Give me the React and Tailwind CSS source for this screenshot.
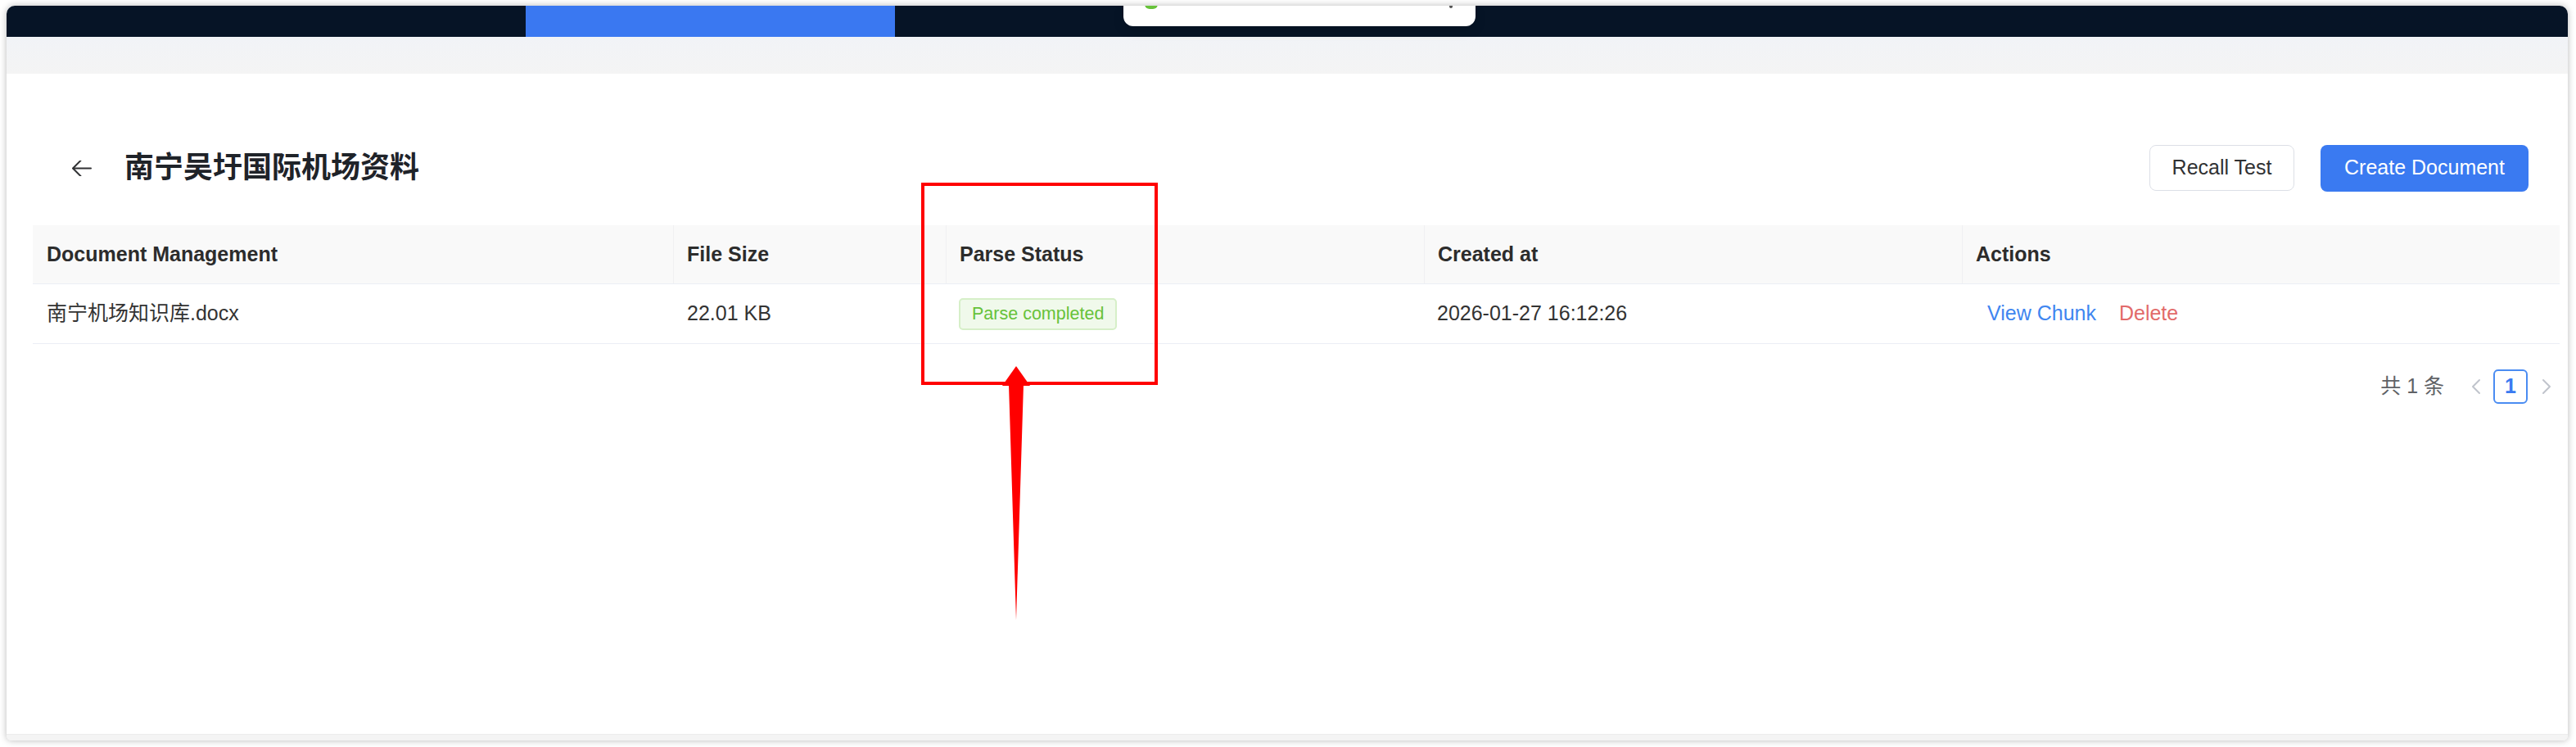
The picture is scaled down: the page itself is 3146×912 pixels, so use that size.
import { ArrowLeft } from "lucide-react";

const columns = ["Document Management", "File Size", "Parse Status", "Created at", "Actions"];

const docs = [
  {
    id: 1,
    name: "南宁机场知识库.docx",
    size: "22.01 KB",
    status: "Parse completed",
    createdAt: "2026-01-27 16:12:26",
  },
];

// element-style back arrow
function BackIcon() {
  return (
    <svg viewBox="160 224 736 576" width="24" height="19" fill="#303133">
      <path d="M224 480h640a32 32 0 1 1 0 64H224a32 32 0 0 1 0-64z" />
      <path d="m237.248 512 265.408 265.344a32 32 0 0 1-45.312 45.312l-288-288a32 32 0 0 1 0-45.312l288-288a32 32 0 1 1 45.312 45.312L237.248 512z" />
    </svg>
  );
}

function Chevron({ dir }) {
  return (
    <svg width="12" height="20" viewBox="0 0 12 20" fill="none" stroke="#c0c4cc" strokeWidth="2" strokeLinecap="round" strokeLinejoin="round">
      {dir === "left" ? <polyline points="10,2 2,10 10,18" /> : <polyline points="2,2 10,10 2,18" />}
    </svg>
  );
}

export default function App() {
  return (
    <div className="relative w-[3146px] h-[912px] bg-white overflow-hidden pt-[7px] font-['Liberation_Sans','Noto_Sans_CJK_SC',sans-serif]">
      <div className="relative ml-[8px] w-[3128px] h-[897px] flex flex-col rounded-t-[10px] rounded-b-[6px] overflow-hidden shadow-[0_0_8px_rgba(0,0,0,0.28)]">
        {/* app header */}
        <div className="h-[38px] shrink-0 bg-[#061426] flex">
          <div className="ml-[634px] w-[451px] h-full bg-[#3a78f1]" />
        </div>
        {/* toast, mostly scrolled out of view */}
        <div className="absolute top-0 left-[1364px] w-[430px] h-[25px] bg-white rounded-b-[12px] shadow-[0_6px_14px_rgba(0,0,0,0.12)]">
          <div className="absolute -top-[8px] left-[26px] w-[16px] h-[12px] rounded-full bg-[#67c23a]" />
          <div className="absolute top-0 right-[28px] w-[4px] h-[3px] rounded-b-full bg-[#555]" />
        </div>
        <div className="h-[45px] shrink-0 bg-gradient-to-b from-[#f1f3f7] to-[#f4f4f4]" />

        <div className="flex-1 bg-white pl-[32px] pr-[10px] pt-[87px]">
          <div className="h-[56px] flex items-center justify-between pl-[48px] pr-[38px]">
            <div className="flex items-center gap-[40px]">
              <BackIcon />
              <h1 className="text-[36px] leading-none font-bold text-[#1f2329]">南宁吴圩国际机场资料</h1>
            </div>
            <div className="flex items-center gap-[32px]">
              <button className="w-[177px] h-[56px] rounded-[8px] border border-[#dcdfe6] bg-white text-[25px] text-[#303133]">
                Recall Test
              </button>
              <button className="w-[254px] h-[57px] rounded-[8px] bg-[#3a7af1] text-[25px] text-white">
                Create Document
              </button>
            </div>
          </div>

          <div className="mt-[42px] w-full">
            <div className="grid grid-cols-[782px_333px_584px_657px_1fr] h-[72px] bg-[#f9f9f9] border-b border-[#ebeef5]">
              {columns.map((c, i) => (
                <div
                  key={c}
                  className={`flex items-center text-[25px] font-bold text-[#2c2c2c] ${i > 0 ? "pl-[16px] border-l border-[#f0f0f2]" : "pl-[17px]"}`}
                >
                  {c}
                </div>
              ))}
            </div>
            {docs.map((d) => (
              <div
                key={d.id}
                className="grid grid-cols-[782px_333px_584px_657px_1fr] h-[73px] border-b border-[#ebeef5] text-[25px] text-[#333]"
              >
                <div className="flex items-center pl-[17px]">{d.name}</div>
                <div className="flex items-center pl-[17px]">{d.size}</div>
                <div className="flex items-center pl-[16px]">
                  <span className="h-[39px] px-[14px] flex items-center rounded-[5px] border-2 border-[#d6efc8] bg-[#f0f9eb] text-[21.5px] text-[#67c23a]">
                    {d.status}
                  </span>
                </div>
                <div className="flex items-center pl-[16px]">{d.createdAt}</div>
                <div className="flex items-center pl-[31px] gap-[28px]">
                  <span className="text-[#3f86f0]">View Chunk</span>
                  <span className="text-[#e26a6a]">Delete</span>
                </div>
              </div>
            ))}
          </div>

          <div className="mt-[31px] flex items-center justify-end text-[25px] text-[#606266]">
            <span className="mr-[23px]">共 1 条</span>
            <div className="w-[32px] h-[42px] flex items-center justify-center">
              <Chevron dir="left" />
            </div>
            <div className="ml-[5px] w-[42px] h-[42px] flex items-center justify-center rounded-[6px] border-2 border-[#4a8cf2] font-bold text-[#3a7af1]">
              1
            </div>
            <div className="ml-[7px] w-[32px] h-[42px] flex items-center justify-center">
              <Chevron dir="right" />
            </div>
          </div>
        </div>

        <div className="h-[8px] shrink-0 bg-[#f4f4f4] border-t border-[#ececec]" />
      </div>

      {/* red callout around the status column */}
      <div className="absolute left-[1125px] top-[223px] w-[289px] h-[247px] border-4 border-[#ff0000]" />
      <svg className="absolute left-0 top-0 pointer-events-none" width="3146" height="912">
        <polygon points="1241,447 1224,471 1258,471" fill="#ff0000" />
        <polygon points="1232,470 1250,470 1241,757" fill="#ff0000" />
      </svg>
    </div>
  );
}
